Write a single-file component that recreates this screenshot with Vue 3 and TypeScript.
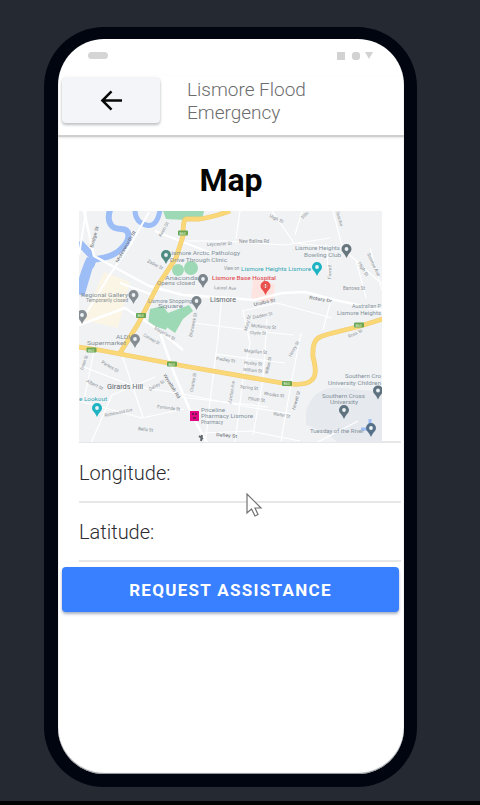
<script setup lang="ts">
interface MapLabel {
  t: string
  x: number
  y: number
  w: number
  s?: number
  r?: number
  k?: string
}

interface Pin {
  x: number
  y: number
  c: string
}

const labels: MapLabel[] = [
  { t: 'Bridge St', x: 93, y: 248, w: 22, r: -75, k: 'dark' },
  { t: 'Molesworth St', x: 118, y: 263, w: 36, r: -60, k: 'dark' },
  { t: 'Keen St', x: 161, y: 237, w: 16, r: -60 },
  { t: 'Zadoc St', x: 147, y: 262, w: 17, r: 28 },
  { t: 'High St', x: 269, y: 217, w: 15, r: 25 },
  { t: 'Leycester St', x: 207, y: 246, w: 25, r: -3 },
  { t: 'New Ballina Rd', x: 239, y: 243, w: 30, r: 0 },
  { t: 'Dibbs', x: 303, y: 219, w: 8, r: -45 },
  { t: 'Lismore Arctic Pathology', x: 168, y: 255, w: 72, s: 6, k: 'poi' },
  { t: 'Drive Through Clinic', x: 170, y: 262, w: 57, s: 6, k: 'poi' },
  { t: 'View on', x: 224, y: 270, w: 15 },
  { t: 'Lismore Heights Lismore', x: 241, y: 271, w: 70, s: 6, k: 'teal' },
  { t: 'Lismore Base Hospital', x: 212, y: 280, w: 64, s: 6, k: 'red' },
  { t: 'Laurel Ave', x: 214, y: 289, w: 22, r: 3 },
  { t: 'Lismore', x: 210, y: 302, w: 26, s: 7, k: 'town' },
  { t: 'Uralba St', x: 254, y: 306, w: 22, r: -12, k: 'dark' },
  { t: 'Diadem St', x: 253, y: 319, w: 20, r: -12 },
  { t: 'Lismore Heights', x: 295, y: 250, w: 45, s: 6, k: 'poi' },
  { t: 'Bowling Club', x: 304, y: 257, w: 37, s: 6, k: 'poi' },
  { t: 'Ross Ave', x: 336, y: 212, w: 15, r: 74 },
  { t: 'Farrell', x: 331, y: 279, w: 14, r: -88 },
  { t: 'High St', x: 358, y: 263, w: 16, r: 60 },
  { t: 'Sunrise Ave', x: 367, y: 254, w: 25, r: 65 },
  { t: 'Barrows St', x: 343, y: 290, w: 22 },
  { t: 'Rotary Dr', x: 309, y: 299, w: 23, r: 9, k: 'dark' },
  { t: 'Australian P', x: 352, y: 308, w: 29, s: 6, k: 'poi' },
  { t: 'Lismore Heights', x: 337, y: 315, w: 44, s: 6, k: 'poi' },
  { t: 'Regional Gallery', x: 81, y: 297, w: 47, s: 6, k: 'poi' },
  { t: 'Temporarily closed', x: 86, y: 302, w: 42 },
  { t: 'Lismore Shopping', x: 148, y: 303, w: 44, s: 5.5, k: 'poi' },
  { t: 'Square', x: 158, y: 308, w: 25, k: 'poi' },
  { t: 'Anaconda', x: 165, y: 280, w: 33, s: 6, k: 'poi' },
  { t: 'Opens closed', x: 157, y: 285, w: 38 },
  { t: 'ALDI', x: 116, y: 339, w: 14, s: 6, k: 'poi' },
  { t: 'Supermarket', x: 87, y: 344.5, w: 39 },
  { t: 'Magellan St', x: 154, y: 329, w: 23, r: 30 },
  { t: 'Conway St', x: 143, y: 336, w: 18, r: 30 },
  { t: 'Union St', x: 83, y: 370, w: 15, r: -70 },
  { t: 'Parkes St', x: 101, y: 363, w: 19, r: 30 },
  { t: 'Albert St', x: 86, y: 382, w: 18, r: 27 },
  { t: 'Girards Hill', x: 107, y: 389, w: 36, s: 7, k: 'town' },
  { t: 'Wyrallah Rd', x: 163, y: 375, w: 28, r: 58, k: 'dark' },
  { t: 'Dalley St', x: 150, y: 391, w: 17, r: -30 },
  { t: 'Esmonde St', x: 157, y: 408, w: 23, r: 7 },
  { t: 'Rotherwood Ave', x: 105, y: 417, w: 28, r: -12 },
  { t: 'Bella St', x: 138, y: 430, w: 15, r: 7 },
  { t: 'e Lookout', x: 79, y: 401, w: 28, s: 6, k: 'teal' },
  { t: 'Brunswick St', x: 192, y: 337, w: 24, r: -78 },
  { t: 'McKenzie St', x: 251, y: 327, w: 25, r: 5 },
  { t: 'Clyde St', x: 250, y: 334, w: 16, r: 3 },
  { t: 'Mary St', x: 247, y: 331, w: 16, r: -76 },
  { t: 'Magellan St', x: 244, y: 352, w: 23, r: 5 },
  { t: 'Fredley St', x: 216, y: 360, w: 19, r: 8 },
  { t: 'Huxley St', x: 244, y: 364, w: 18, r: 5 },
  { t: 'William St', x: 243, y: 371, w: 19, r: 5 },
  { t: 'Willow St', x: 268, y: 374, w: 17, r: -78 },
  { t: 'Charles St', x: 193, y: 392, w: 19, r: -80 },
  { t: 'Spring St', x: 240, y: 388, w: 18, r: 7 },
  { t: 'Rhodes St', x: 264, y: 395, w: 20, r: 7 },
  { t: 'Elliott St', x: 248, y: 400, w: 17, r: 7 },
  { t: 'Junction Ave', x: 231, y: 404, w: 23, r: -80 },
  { t: 'Walter St', x: 273, y: 415, w: 17, r: 10 },
  { t: 'Priceline', x: 201, y: 412, w: 24, s: 6, k: 'poi' },
  { t: 'Pharmacy Lismore', x: 201, y: 418, w: 52, s: 6, k: 'poi' },
  { t: 'Pharmacy', x: 201, y: 424, w: 22, k: 'poi' },
  { t: 'Dalley St', x: 216, y: 436, w: 21, r: 5, k: 'dark' },
  { t: 'Henry St', x: 291, y: 357, w: 17, r: -60 },
  { t: 'Ross St', x: 349, y: 338, w: 15, r: -25 },
  { t: 'Hewett St', x: 295, y: 410, w: 19, r: -74 },
  { t: 'Southern Cro', x: 345, y: 378, w: 36, s: 6, k: 'poi' },
  { t: 'University Children', x: 328, y: 384.5, w: 53, s: 6, k: 'poi' },
  { t: 'Southern Cross', x: 322, y: 398, w: 43, s: 6, k: 'poi' },
  { t: 'University', x: 330, y: 404, w: 28, s: 6, k: 'poi' },
  { t: 'Tuesday of the River', x: 310, y: 433, w: 54, s: 6, k: 'poi' },
]

const pins: Pin[] = [
  { x: 166, y: 256, c: '#4f8b80' },
  { x: 133.5, y: 296, c: '#858d93' },
  { x: 82, y: 316, c: '#858d93' },
  { x: 203, y: 280, c: '#7b858b' },
  { x: 196.5, y: 302, c: '#7b858b' },
  { x: 135, y: 340, c: '#858d93' },
  { x: 346.5, y: 250, c: '#68767e' },
  { x: 317, y: 268, c: '#1eb3c2' },
  { x: 97, y: 409, c: '#1eb3c2' },
  { x: 265.5, y: 287, c: '#ea4f4b' },
  { x: 378, y: 391.5, c: '#5f7280' },
  { x: 344, y: 411, c: '#5f7280' },
  { x: 371, y: 429, c: '#557189' },
]

const shields = [
  [183, 233],
  [141, 315.5],
  [91.5, 350],
  [172, 364],
  [287, 383.5],
  [359, 325],
]
</script>

<template>
  <main class="stage">
    <div class="phone">
      <div class="screen">
        <div class="status">
          <span class="pill"></span>
          <svg class="indicators" viewBox="0 0 36 8">
            <rect x="0" y="0" width="8" height="8" />
            <rect x="15" y="0" width="8" height="8" rx="3" />
            <path d="M28 0h8l-4 7z" />
          </svg>
        </div>
        <header class="toolbar">
          <button class="back" aria-label="Back">
            <svg viewBox="0 0 24 24"><path d="M23 12H3M12 2.500 2.500 12l9.500 9.500" /></svg>
          </button>
          <div class="title">Lismore Flood<br />Emergency</div>
        </header>
        <h1>Map</h1>
        <div class="row map-row">
          <svg class="map" viewBox="79 211 303 231">
            <rect x="79" y="211" width="303" height="232" fill="#f0f2f4" />
            <path d="M104 272l26 10-12 46-36-8z" fill="#fbf5e6" />
            <path d="M253 279l22 5-2 18-22-2z" fill="#fde4e1" />
            <path d="M306 411q8-26 36-23l40 4v51h-45q-5-10-31-18z" fill="#e6e9ee" />
            <g fill="#9dd9b4">
              <path d="M163 211h41l-2 10-17-1-19-1z" />
              <circle cx="191" cy="268" r="7" />
              <circle cx="178" cy="270" r="6" />
              <path d="M150 309l13-3 8 11-5 13-18-6z" />
              <path d="M168 313l21-8 4 6-10 8-8 14-10-7z" />
            </g>
            <g class="water">
              <path d="M110 210C106 223 112 229 121 229S131 238 123 247 106 258 90 260" stroke-width="6" />
              <path d="M79 242l12 13q4 5-2 13l-8 27" stroke-width="7" />
              <path d="M91 259q-6 12-11 33" stroke-width="9" />
              <path d="M135 210q0 12 11 15t14-15" stroke-width="5" />
              <path d="M361 429h10M370 419v12" stroke-width="3" />
            </g>
            <g class="streets">
              <path d="M84 211l10 45 55 30 34 9 46 3 25 2 28-7 23-1 30 8 47 10" stroke-width="2.500" />
              <path d="M149 212l-18 32-20 29-32 52M155 231l56 22M120 283l36 13M86 211l-7 44" stroke-width="2" />
              <path d="M79 325l46-17 34 22 15 43 18 42 15 28M159 330l24 20" stroke-width="2.500" />
              <path d="M222 296l-4 42-9 71-3 29M243 311l7 32-7 36-8 64M267 319l-4 61-10 55" />
              <path d="M187 241h39l59 4 45-7M240 211l-4 28M272 211l22 32 48 5 40 36M302 211l-7 24M333 211l9 35" />
              <path d="M79 365l54 21 50 8 65 13 43 7M94 351l-10 49M121 352l22 65M79 401l63 17 42-9M91 443l21-48 43-18" />
              <path d="M242 311l35-8 55 15M215 354l70 9M195 323l60 8 39 4M301 333l-10 51-10 57M331 300l-8 30" />
              <path d="M205 433l45-2 50 10M180 397l88 10M329 278l-3-34M356 260l10 38M370 248l12 42M316 443l42-22" />
            </g>
            <g class="highway-edge">
              <path d="M230 211q-17 6-30 8h-14q-3 0-3 17l-7 22-18 27-20 39-18 29" />
              <path d="M79 347l20 3 85 16 98 17q31 5 33-9 1-6-2-17-1-17 7-20 7-3 37-10l26-8" />
            </g>
            <g class="highway">
              <path d="M230 211q-17 6-30 8h-14q-3 0-3 17l-7 22-18 27-20 39-18 29" />
              <path d="M79 347l20 3 85 16 98 17q31 5 33-9 1-6-2-17-1-17 7-20 7-3 37-10l26-8" />
            </g>
            <g v-for="(s, i) in shields" :key="'s' + i">
              <rect :x="s[0] - 5" :y="s[1] - 2.5" width="10" height="5" rx="1" fill="#69a653" />
              <text :x="s[0] - 3.5" :y="s[1] + 1.5" font-size="3.500" fill="#e8f5df">B60</text>
            </g>
            <text
              v-for="(l, i) in labels"
              :key="i"
              :class="['label', l.k]"
              :x="l.x"
              :y="l.y"
              :font-size="l.s ?? 4.6"
              :textLength="l.w"
              lengthAdjust="spacingAndGlyphs"
              :transform="`rotate(${l.r ?? 0} ${l.x} ${l.y})`"
            >{{ l.t }}</text>
            <g v-for="(p, i) in pins" :key="'p' + i" :transform="`translate(${p.x} ${p.y})`">
              <path d="M0 8C-1 6-2 4-3.500 2.500A5 5 0 1 1 3.500 2.500C2 4 1 6 0 8Z" :fill="p.c" />
              <circle cy="-1" r="1.900" fill="#edf2f4" />
            </g>
            <path d="M264.300 284v4M266.700 284v4M264.300 286h2.400" stroke="#d8413d" stroke-width=".8" />
            <rect x="190" y="411" width="9" height="10" fill="#df0785" />
            <path d="M192 413h2v2h-2zM195 413h2v2h-2zM193 417h3v2h-3z" fill="#7c164f" />
            <path d="M199 436l4 3M202 435l-1 6" stroke="#62686d" stroke-width="2" />
          </svg>
        </div>
        <div class="row field">Longitude:</div>
        <div class="row field">Latitude:</div>
        <button class="request">REQUEST ASSISTANCE</button>
      </div>
    </div>
    <svg class="cursor" viewBox="0 0 17 25">
      <path d="M1 1v19l4.500-4 3.500 7 3-1.500-3-6.500h6z" />
    </svg>
  </main>
</template>

<style>
body {
  margin: 0;
  background: #242932;
}
</style>

<style scoped>
.stage {
  position: relative;
  box-sizing: border-box;
  width: 480px;
  height: 805px;
  padding: 27px 0 0 44px;
  overflow: hidden;
  background: #242932;
  border-bottom: 4px solid #020305;
  font-family: Roboto, 'Liberation Sans', sans-serif;
}
.phone {
  box-sizing: border-box;
  width: 373px;
  height: 760px;
  padding: 12px 13px 13px 14px;
  border-radius: 60px;
  background: #01050f;
}
.screen {
  display: flex;
  flex-direction: column;
  width: 346px;
  height: 735px;
  overflow: hidden;
  border-radius: 46px;
  background: #fff;
  box-shadow: inset 0 -1px 1px #8b8e93;
}
.status {
  display: flex;
  flex: none;
  justify-content: space-between;
  align-items: flex-start;
  box-sizing: border-box;
  height: 37px;
  padding: 13px 31px 0 30px;
}
.pill {
  width: 20px;
  height: 7px;
  border-radius: 4px;
  background: #d5d5d5;
}
.indicators {
  width: 36px;
  height: 8px;
  fill: #d2d2d2;
}
.toolbar {
  display: flex;
  flex: none;
  box-sizing: border-box;
  height: 61px;
  padding: 2px 4px;
  border-bottom: 2px solid #cfcfcf;
  box-shadow: 0 1px 2px #e5e5e5;
}
button {
  border: 0;
  padding: 0;
  font-family: inherit;
}
.back {
  display: flex;
  justify-content: center;
  align-items: center;
  width: 98px;
  height: 45px;
  border-radius: 4px;
  background: #f4f5f8;
  box-shadow: 0 2px 3px #bfc1c3, 0 0 3px #e4e5e7;
}
.back svg {
  width: 23px;
  height: 23px;
  fill: none;
  stroke: #080808;
  stroke-width: 2.6;
}
.title {
  padding: 1px 0 0 27px;
  color: #6c6c6c;
  font-size: 19px;
  font-weight: 300;
  line-height: 22.5px;
}
h1 {
  flex: none;
  height: 74px;
  margin: 0;
  color: #050505;
  font-size: 32px;
  font-weight: 700;
  line-height: 86px;
  text-align: center;
}
.row {
  flex: none;
  box-sizing: border-box;
  margin: 0 3px 0 21px;
  border-bottom: 2px solid #e6e7e8;
}
.map-row {
  height: 232px;
}
.map {
  display: block;
  width: 303px;
  height: 231px;
}
.water,
.streets,
.highway,
.highway-edge {
  fill: none;
  stroke-linejoin: round;
}
.water {
  stroke: #9dbdf7;
}
.streets {
  stroke: #fff;
  stroke-width: 1.2;
}
.highway {
  stroke: #fbd877;
  stroke-width: 3.6;
}
.highway-edge {
  stroke: #f1cc72;
  stroke-width: 4.8;
}
.label {
  fill: #8b9094;
}
.dark {
  fill: #676c71;
}
.poi {
  fill: #83919b;
}
.town {
  fill: #60666b;
}
.teal {
  fill: #35a8b6;
}
.red {
  fill: #e35257;
  font-weight: 500;
}
.field {
  height: 59.5px;
  padding-top: 17.5px;
  color: #2c2c30;
  font-size: 20px;
  font-weight: 300;
  line-height: 24px;
}
.request {
  flex: none;
  width: 337px;
  height: 45px;
  margin: 5px 0 0 4px;
  border-radius: 4px;
  background: #3880ff;
  box-shadow: 0 2px 3px #a7b2c4;
  color: #fff;
  font-size: 17px;
  font-weight: 700;
  letter-spacing: 1.3px;
}
.cursor {
  position: absolute;
  left: 246px;
  top: 493px;
  width: 17px;
  height: 25px;
  fill: #fff;
  stroke: #727272;
  stroke-width: 1.2;
}
</style>
